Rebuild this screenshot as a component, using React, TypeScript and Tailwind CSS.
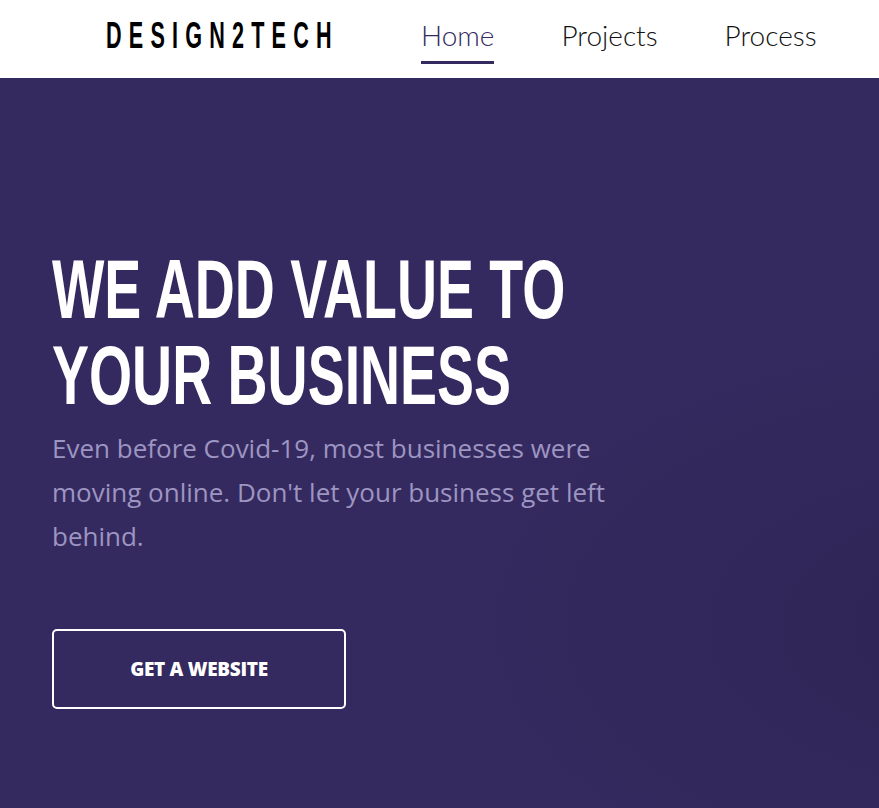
import React from 'react';

const navItems = ['Home', 'Projects', 'Process'];

const App: React.FC = () => {
  return (
    <div className="min-h-screen bg-[#352a5f]" style={{ fontFamily: '"Open Sans", Lato, sans-serif' }}>
      <header className="h-[78px] bg-white flex items-start">
        <div className="w-[421px] pl-[106px] pt-[19px] shrink-0">
          <span
            className="inline-block origin-left scale-x-[0.6] text-[36px] font-bold tracking-[12px] text-black leading-[34px]"
            style={{ fontFamily: '"Liberation Sans", Arial, sans-serif' }}
          >
            DESIGN2TECH
          </span>
        </div>
        <nav className="flex items-start gap-[67px] pt-[15px]" style={{ fontFamily: 'Lato, sans-serif' }}>
          {navItems.map((item, i) => (
            <div key={item} className="flex flex-col items-stretch">
              <span
                className={`text-[28px] font-light leading-[40px] ${i === 0 ? 'text-[#352a5f]' : 'text-[#111]'}`}
              >
                {item}
              </span>
              <div className={`h-[3px] mt-[6px] ${i === 0 ? 'bg-[#352a5f]' : 'bg-transparent'}`} />
            </div>
          ))}
        </nav>
      </header>

      <main className="h-[730px] pl-[52px] pt-[168px] bg-[radial-gradient(ellipse_at_115%_75%,#2f2455_0%,#352a5f_40%)]">
        <h1
          className="origin-left scale-x-[0.66] w-[900px] text-[84px] font-bold leading-[86px] text-white uppercase"
          style={{ fontFamily: '"Liberation Sans", Arial, sans-serif' }}
        >
          We add value to
          <br />
          your business
        </h1>
        <p className="mt-[8px] w-[575px] text-[26px] leading-[44px] text-[#9d95c2]">
          Even before Covid-19, most businesses were moving online. Don't let your business get left behind.
        </p>
        <button className="mt-[71px] w-[294px] h-[80px] border-2 border-white rounded-[5px] text-white text-[19px] font-extrabold tracking-[-0.3px]">
          GET A WEBSITE
        </button>
      </main>
    </div>
  );
};

export default App;
